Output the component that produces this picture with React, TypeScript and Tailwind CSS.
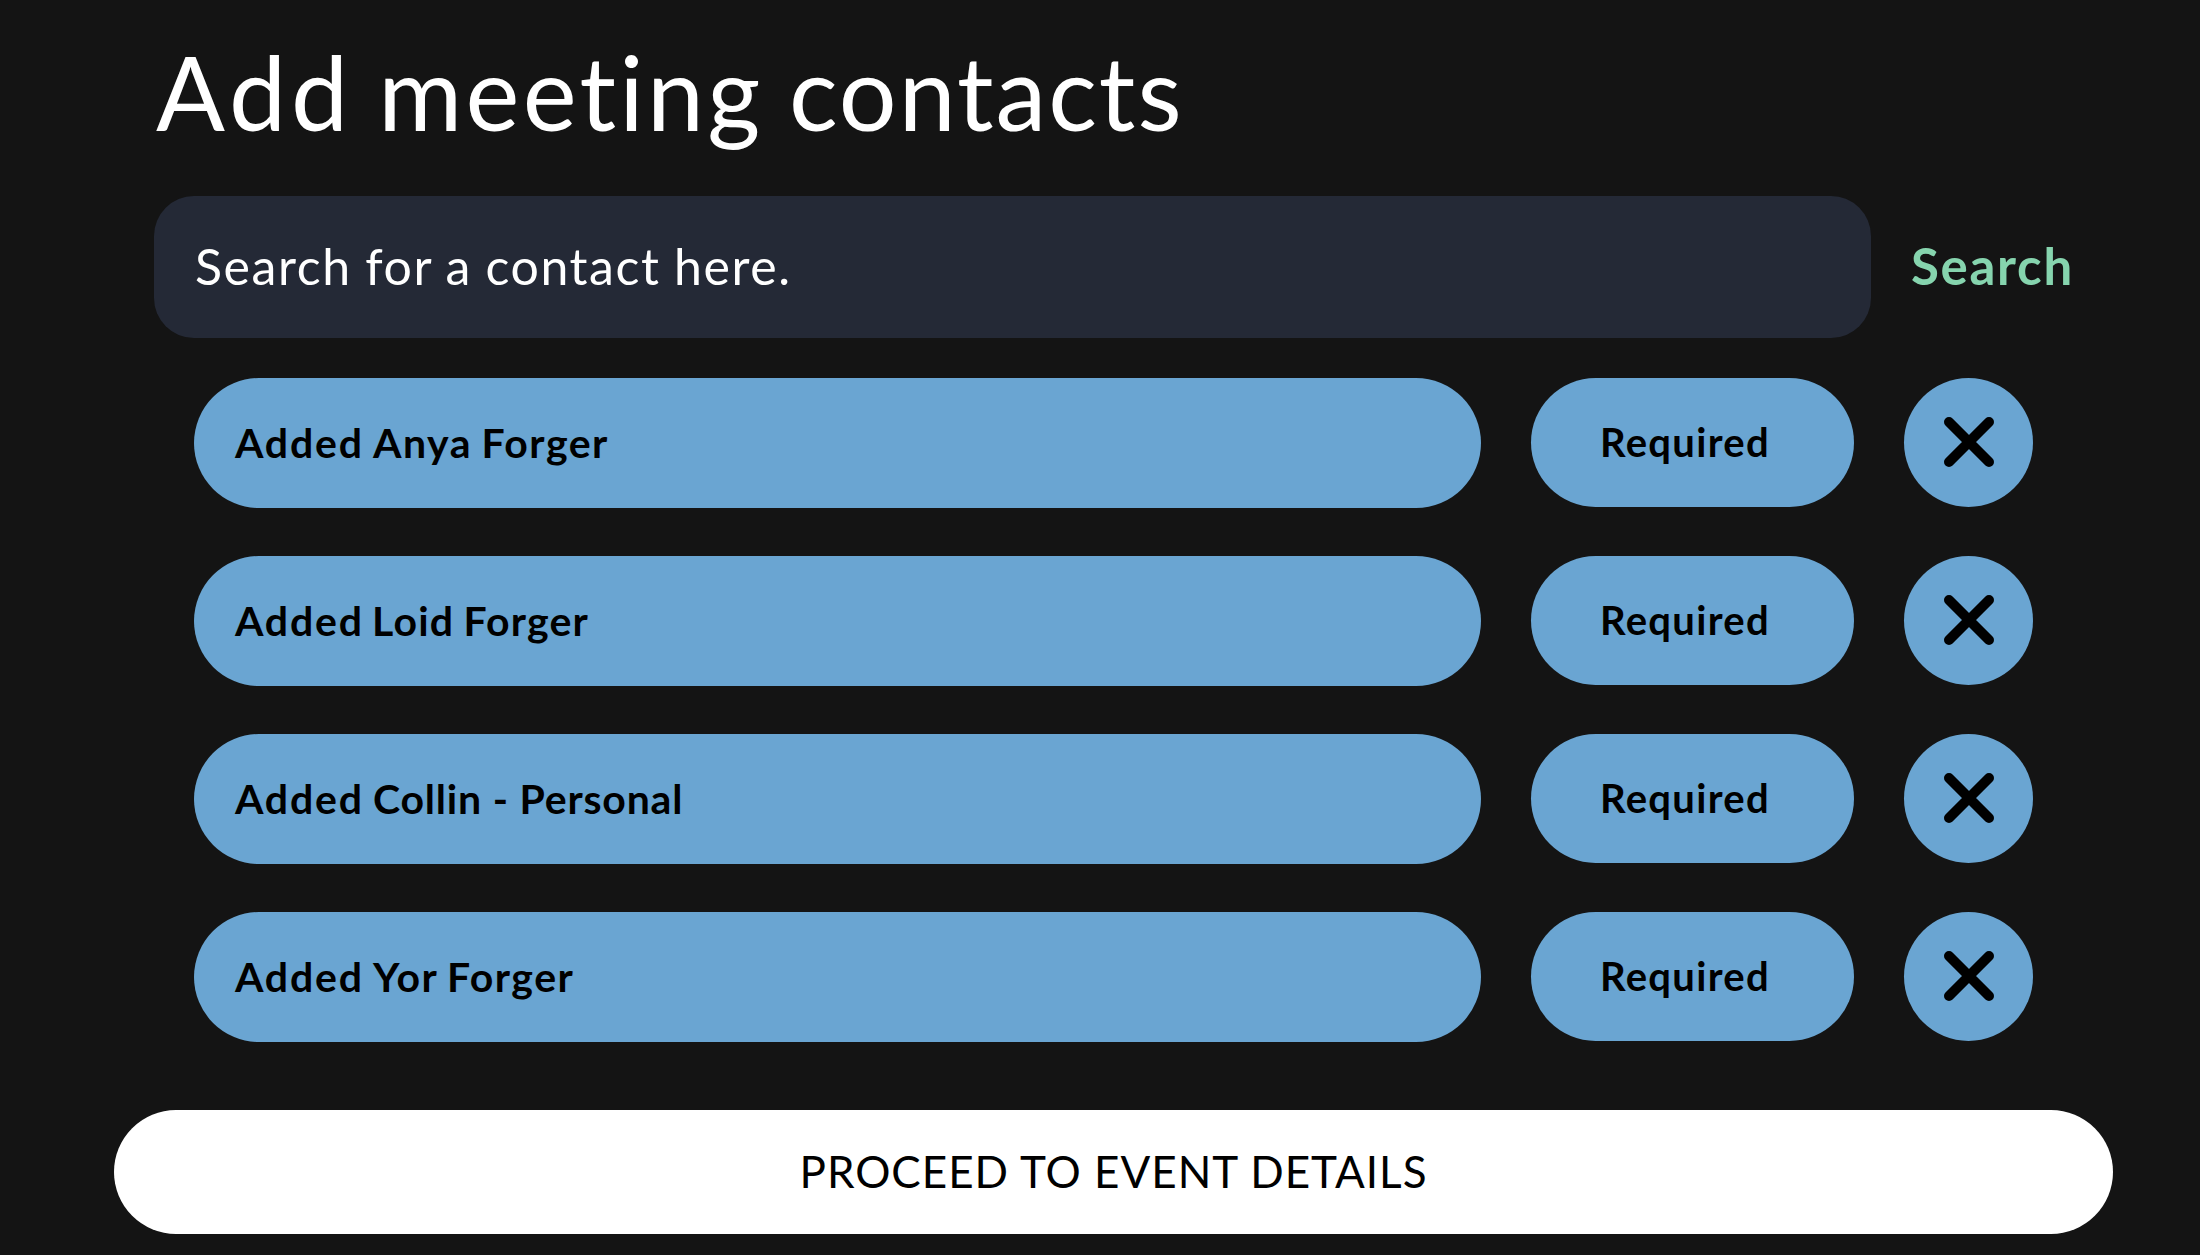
type Contact = { name: string; tracking: string };

const contacts: Contact[] = [
  { name: "Anya Forger", tracking: "pl-px tracking-[1.5px] [word-spacing:-2px]" },
  { name: "Loid Forger", tracking: "tracking-[1.2px] [word-spacing:-2px]" },
  { name: "Collin - Personal", tracking: "pl-px tracking-[0.8px]" },
  { name: "Yor Forger", tracking: "pl-px tracking-[1.5px] [word-spacing:-2px]" },
];

function CloseIcon() {
  return (
    <svg width="52" height="52" viewBox="0 0 52 52" fill="none" className="ml-px mb-px">
      <path d="M6 6 46 46M46 6 6 46" stroke="#000" strokeWidth="10" strokeLinecap="round" />
    </svg>
  );
}

function ContactRow({ name, tracking }: Contact) {
  return (
    <li className="flex h-[130px] items-start">
      <div className="flex h-[130px] w-[1287px] items-center rounded-full bg-[#6aa5d2] pb-[2px] pl-[41px] text-[41px] leading-none font-bold whitespace-nowrap">
        <span className="w-[137px] tracking-[1.8px]">Added </span>
        <span className={tracking}>{name}</span>
      </div>
      <button className="ml-[50px] flex h-[129px] w-[323px] items-center rounded-full bg-[#6aa5d2] pb-px pl-[69px] text-[40px] leading-none font-bold tracking-[1.3px]">
        Required
      </button>
      <button aria-label={`Remove ${name}`} className="ml-[50px] flex size-[129px] items-center justify-center rounded-full bg-[#6aa5d2]">
        <CloseIcon />
      </button>
    </li>
  );
}

export default function App() {
  return (
    <main className="flex h-[1255px] w-[2200px] flex-col overflow-hidden bg-[#141414] pt-[41px] font-['Lato',sans-serif] text-black">
      <h1 className="ml-[156px] h-[155px] text-[102px] leading-none whitespace-nowrap text-white">
        <span className="tracking-[5px] [word-spacing:-6px]">Add </span>
        <span className="tracking-[3.3px] [word-spacing:-4px]">meeting </span>
        <span className="tracking-[2px]">contacts</span>
      </h1>
      <div className="ml-[154px] flex h-[142px] items-center">
        <div className="flex h-[142px] w-[1717px] items-center rounded-[40px] bg-[#242936] pb-[3px] pl-[41px] text-[50px] leading-none tracking-[1.6px] text-white [word-spacing:-1px]">
          Search for a contact here.
        </div>
        <button className="ml-[40px] pb-[3px] text-[51px] leading-none font-bold tracking-[1.7px] text-[#86d4ae]">
          Search
        </button>
      </div>
      <ul className="mt-[40px] ml-[194px] flex flex-col gap-[48px]">
        {contacts.map((c) => (
          <ContactRow key={c.name} {...c} />
        ))}
      </ul>
      <button className="mt-[68px] ml-[114px] flex h-[124px] w-[1999px] items-center justify-center rounded-full bg-white pb-[2px] text-[44px] leading-none tracking-[1px]">
        PROCEED TO EVENT DETAILS
      </button>
    </main>
  );
}
